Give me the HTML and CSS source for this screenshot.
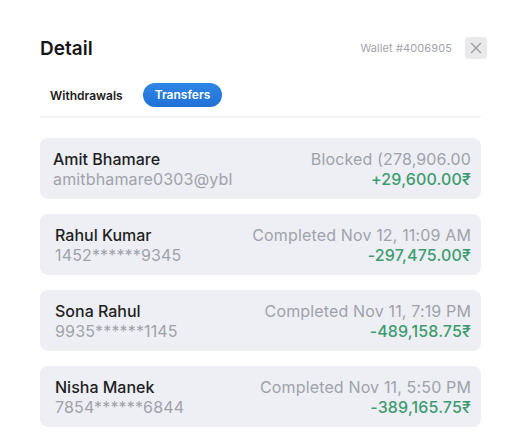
FILE: index.html
```html
<!DOCTYPE html>
<html>
<head>
<meta charset="utf-8">
<link rel="stylesheet" href="styles.css">
</head>
<body>
<div class="panel">
  <div class="header">
    <h1 class="title">Detail</h1>
    <div class="header-right">
      <span class="wallet">Wallet #4006905</span>
      <button class="close" aria-label="Close">
        <svg width="12" height="12" viewBox="0 0 12 12"><path d="M1.5 1.5 L10.5 10.5 M10.5 1.5 L1.5 10.5" stroke="#9a9aa0" stroke-width="1.3" fill="none" stroke-linecap="round"/></svg>
      </button>
    </div>
  </div>
  <div class="tabs">
    <span class="tab">Withdrawals</span>
    <span class="tab active">Transfers</span>
  </div>
  <div class="divider"></div>
  <div class="list">
    <div class="card first">
      <div class="left">
        <div class="name">Amit Bhamare</div>
        <div class="sub">amitbhamare0303@ybl</div>
      </div>
      <div class="right">
        <div class="status">Blocked (278,906.00</div>
        <div class="amount">+29,600.00₹</div>
      </div>
    </div>
    <div class="card">
      <div class="left">
        <div class="name">Rahul Kumar</div>
        <div class="sub">1452******9345</div>
      </div>
      <div class="right">
        <div class="status">Completed Nov 12, 11:09 AM</div>
        <div class="amount">-297,475.00₹</div>
      </div>
    </div>
    <div class="card">
      <div class="left">
        <div class="name">Sona Rahul</div>
        <div class="sub">9935******1145</div>
      </div>
      <div class="right">
        <div class="status">Completed Nov 11, 7:19 PM</div>
        <div class="amount">-489,158.75₹</div>
      </div>
    </div>
    <div class="card">
      <div class="left">
        <div class="name">Nisha Manek</div>
        <div class="sub">7854******6844</div>
      </div>
      <div class="right">
        <div class="status">Completed Nov 11, 5:50 PM</div>
        <div class="amount">-389,165.75₹</div>
      </div>
    </div>
  </div>
</div>
</body>
</html>
```

FILE: styles.css
```css
* { box-sizing: border-box; }
html, body { margin: 0; padding: 0; background: #ffffff; }
body {
  font-family: Inter, "Noto Sans", "DejaVu Sans", sans-serif;
  color: #1f1f24;
  width: 520px;
  height: 438px;
  overflow: hidden;
}
.panel {
  padding: 37px 33px 0 40px;
}
.header {
  display: flex;
  align-items: center;
  justify-content: space-between;
  height: 22px;
}
.title {
  margin: 0;
  font-size: 19px;
  font-weight: 600;
  line-height: 22px;
  color: #16161a;
  padding-top: 2px;
}
.header-right {
  display: flex;
  align-items: center;
  gap: 13px;
}
.wallet {
  font-size: 11px;
  letter-spacing: 0.1px;
  color: #a3a4ab;
}
.close {
  width: 22px;
  height: 22px;
  border: none;
  border-radius: 4px;
  background: #e9e9ec;
  display: flex;
  align-items: center;
  justify-content: center;
  padding: 0;
}
.tabs {
  display: flex;
  align-items: center;
  gap: 20px;
  margin-top: 24px;
  padding-left: 10px;
  height: 24px;
}
.tab {
  font-size: 12px;
  font-weight: 600;
  color: #1c1c20;
}
.tab.active {
  background: linear-gradient(180deg, #2f86e6, #2170d6);
  color: #ffffff;
  border-radius: 12px;
  height: 24px;
  line-height: 24px;
  padding: 0 12px;
  width: 79px;
  text-align: center;
}
.divider {
  height: 2px;
  background: #f3f4f7;
  margin-top: 9px;
  margin-right: 6px;
}
.list {
  display: flex;
  flex-direction: column;
  gap: 15px;
  margin-top: 20px;
  margin-right: 6px;
}
.card {
  background: #edeff5;
  border-radius: 8px;
  height: 61px;
  display: flex;
  justify-content: space-between;
  align-items: flex-start;
  padding: 11px 10px 0 15px;
  font-size: 16px;
  line-height: 20px;
  letter-spacing: 0.15px;
}
.card.first { padding-left: 13px; }
.name {
  font-weight: 500;
  color: #1f1f24;
  letter-spacing: 0;
}
.sub, .status {
  color: #a0a2aa;
}
.right { text-align: right; }
.amount {
  color: #3d9c6f;
  font-weight: 500;
}
```
